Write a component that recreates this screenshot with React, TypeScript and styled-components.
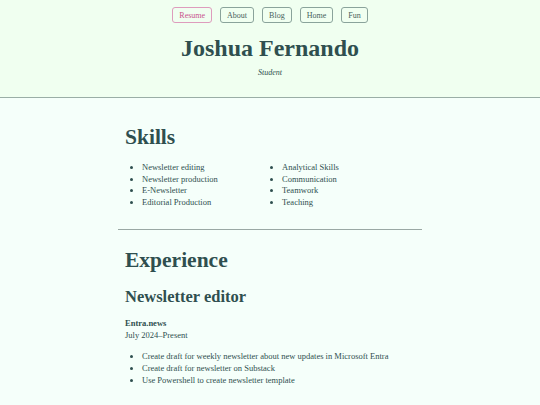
import React from 'react';
import styled, { createGlobalStyle } from 'styled-components';

const GlobalStyle = createGlobalStyle`
  html, body {
    margin: 0;
    padding: 0;
    background: #f5fffa;
    color: #2f4f4f;
    font-family: "Liberation Serif", "DejaVu Serif", serif;
  }
`;

const StyledHeader = styled.header`
  /* Display */
  background: #f0fff0;
  border-bottom: 1px solid #9aaea6;
  padding: 7px 0 20px;
  display: flex;
  flex-direction: column;
  align-items: center;
`;

const StyledNav = styled.nav`
  display: flex;
  gap: 8px;
`;

const StyledNavButton = styled.a<{ $active?: boolean }>`
  /* Display */
  height: 16px;
  padding: 0 6px;
  box-sizing: border-box;
  display: flex;
  align-items: center;
  border: 1px solid ${({ $active }) => ($active ? '#de9cbd' : '#8aa39b')};
  border-radius: 3px;
  font-size: 8px;
  color: ${({ $active }) => ($active ? '#c9538c' : '#46625c')};
  text-decoration: none;
`;

const StyledName = styled.h1`
  margin: 10px 0 0;
  font-size: 24px;
  font-weight: 700;
  line-height: 30px;
`;

const StyledRole = styled.p`
  margin: 5px 0 0;
  font-size: 8px;
  font-style: italic;
`;

const StyledMain = styled.main`
  width: 304px;
  margin: 0 auto;
  padding-top: 27px;
`;

const StyledSection = styled.section`
  padding: 0 7px 20px;
`;

const StyledDivider = styled.hr`
  margin: 0 0 18px;
  border: 0;
  border-top: 1px solid #9aa8a4;
`;

const StyledHeading = styled.h2`
  margin: 0;
  font-size: 21.5px;
  font-weight: 700;
  line-height: 24px;
`;

const StyledSubHeading = styled.h3`
  margin: 15px 0 0;
  font-size: 16.5px;
  font-weight: 700;
  line-height: 20px;
`;

const StyledList = styled.ul<{ $gap?: number }>`
  margin: ${({ $gap }) => $gap ?? 13}px 0 0;
  padding-left: 17px;
  font-size: 8.5px;
  line-height: 11.7px;
`;

const StyledSkillList = styled(StyledList)`
  display: grid;
  grid-template-columns: repeat(2, 140px);
  grid-template-rows: repeat(4, auto);
  grid-auto-flow: column;
`;

const StyledItem = styled.li`
  list-style: disc;
`;

const StyledCompany = styled.p`
  margin: 11px 0 0;
  font-size: 8.5px;
  font-weight: 700;
  line-height: 11.7px;
`;

const StyledDate = styled.p`
  margin: 0;
  font-size: 8.5px;
  line-height: 11.7px;
`;

const navItems = ['Resume', 'About', 'Blog', 'Home', 'Fun'];

const skills = [
  'Newsletter editing',
  'Newsletter production',
  'E-Newsletter',
  'Editorial Production',
  'Analytical Skills',
  'Communication',
  'Teamwork',
  'Teaching',
];

const duties = [
  'Create draft for weekly newsletter about new updates in Microsoft Entra',
  'Create draft for newsletter on Substack',
  'Use Powershell to create newsletter template',
];

function App() {
  return (
    <>
      <GlobalStyle />
      <StyledHeader>
        <StyledNav>
          {navItems.map((item) => (
            <StyledNavButton key={item} href="#" $active={item === 'Resume'}>
              {item}
            </StyledNavButton>
          ))}
        </StyledNav>
        <StyledName>Joshua Fernando</StyledName>
        <StyledRole>Student</StyledRole>
      </StyledHeader>
      <StyledMain>
        <StyledSection>
          <StyledHeading>Skills</StyledHeading>
          <StyledSkillList>
            {skills.map((skill) => (
              <StyledItem key={skill}>{skill}</StyledItem>
            ))}
          </StyledSkillList>
        </StyledSection>
        <StyledDivider />
        <StyledSection>
          <StyledHeading>Experience</StyledHeading>
          <StyledSubHeading>Newsletter editor</StyledSubHeading>
          <StyledCompany>Entra.news</StyledCompany>
          <StyledDate>July 2024–Present</StyledDate>
          <StyledList $gap={10}>
            {duties.map((duty) => (
              <StyledItem key={duty}>{duty}</StyledItem>
            ))}
          </StyledList>
        </StyledSection>
      </StyledMain>
    </>
  );
}

export default App;
